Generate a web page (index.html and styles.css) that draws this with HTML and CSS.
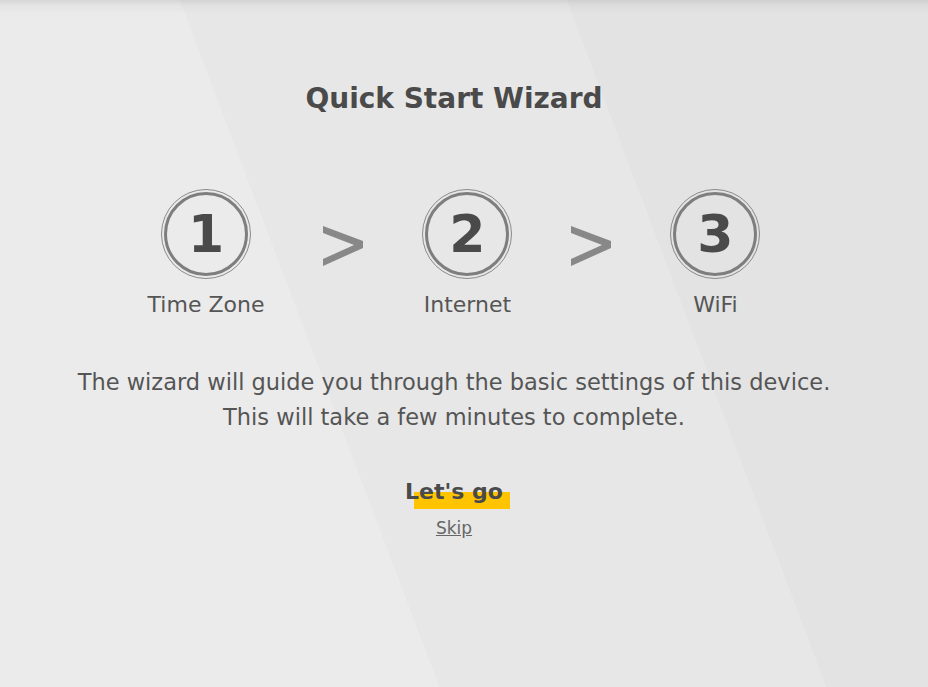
FILE: index.html
```html
<!DOCTYPE html>
<html lang="en">
<head>
<meta charset="utf-8">
<title>Quick Start Wizard</title>
<link rel="stylesheet" href="styles.css">
</head>
<body>
<main class="wizard">
  <h1 class="title">Quick Start Wizard</h1>
  <div class="steps">
    <div class="step">
      <div class="ring"><span class="num">1</span></div>
      <div class="label">Time Zone</div>
    </div>
    <svg class="sep" width="42" height="44" viewBox="0 0 42 44" aria-hidden="true"><polygon points="1,4 41,19 41,26 1,44 1,37 32,23 1,11"/></svg>
    <div class="step">
      <div class="ring"><span class="num">2</span></div>
      <div class="label">Internet</div>
    </div>
    <svg class="sep" width="42" height="44" viewBox="0 0 42 44" aria-hidden="true"><polygon points="1,4 41,19 41,26 1,44 1,37 32,23 1,11"/></svg>
    <div class="step">
      <div class="ring"><span class="num">3</span></div>
      <div class="label">WiFi</div>
    </div>
  </div>
  <p class="desc">The wizard will guide you through the basic settings of this device.<br>This will take a few minutes to complete.</p>
  <a class="go" href="#">Let's go</a>
  <a class="skip" href="#">Skip</a>
</main>
</body>
</html>
```

FILE: styles.css
```css
html, body {
  margin: 0;
  height: 100%;
}
body {
  min-height: 687px;
  font-family: "DejaVu Sans", sans-serif;
  color: #555;
  background:
    linear-gradient(to bottom, rgba(0,0,0,0.09) 0, rgba(0,0,0,0.03) 5px, rgba(0,0,0,0) 14px),
    linear-gradient(69.3deg, #ebebeb 0, #ebebeb 411px, #e7e7e7 411px, #e7e7e7 773px, #e3e3e3 773px);
}
.wizard {
  display: flex;
  flex-direction: column;
  align-items: center;
  padding: 78px 20px 0 0;
}
.title {
  margin: 0;
  font-size: 28px;
  font-weight: bold;
  color: #4a4a4a;
  line-height: 42px;
}
.steps {
  display: flex;
  align-items: flex-start;
  gap: 58px;
  margin-top: 69px;
}
.step {
  display: flex;
  flex-direction: column;
  align-items: center;
}
.ring {
  width: 88px;
  height: 88px;
  border: 1px solid #8a8a8a;
  border-radius: 50%;
  display: flex;
  align-items: center;
  justify-content: center;
  position: relative;
}
.ring::before {
  content: "";
  position: absolute;
  inset: 2px;
  border: 3px solid #7e7e7e;
  border-radius: 50%;
}
.num {
  font-size: 52px;
  font-weight: bold;
  color: #4a4a4a;
  line-height: 1;
}
.label {
  margin-top: 11px;
  font-size: 22px;
  line-height: 30px;
  color: #555;
}
.sep {
  display: block;
  margin-top: 33px;
  fill: #888;
}
.desc {
  margin: 45px 0 0;
  font-size: 22.5px;
  line-height: 35px;
  text-align: center;
  color: #555;
}
.go {
  position: relative;
  margin-top: 42px;
  font-size: 22px;
  font-weight: bold;
  color: #4a4a4a;
  text-decoration: none;
  line-height: 30px;
  z-index: 0;
}
.go::before {
  content: "";
  position: absolute;
  left: 9px;
  right: -7px;
  top: 15px;
  height: 17px;
  background: #ffc400;
  z-index: -1;
}
.skip {
  margin-top: 10px;
  font-size: 17px;
  color: #666;
  text-decoration: underline;
  line-height: 22px;
}
```
